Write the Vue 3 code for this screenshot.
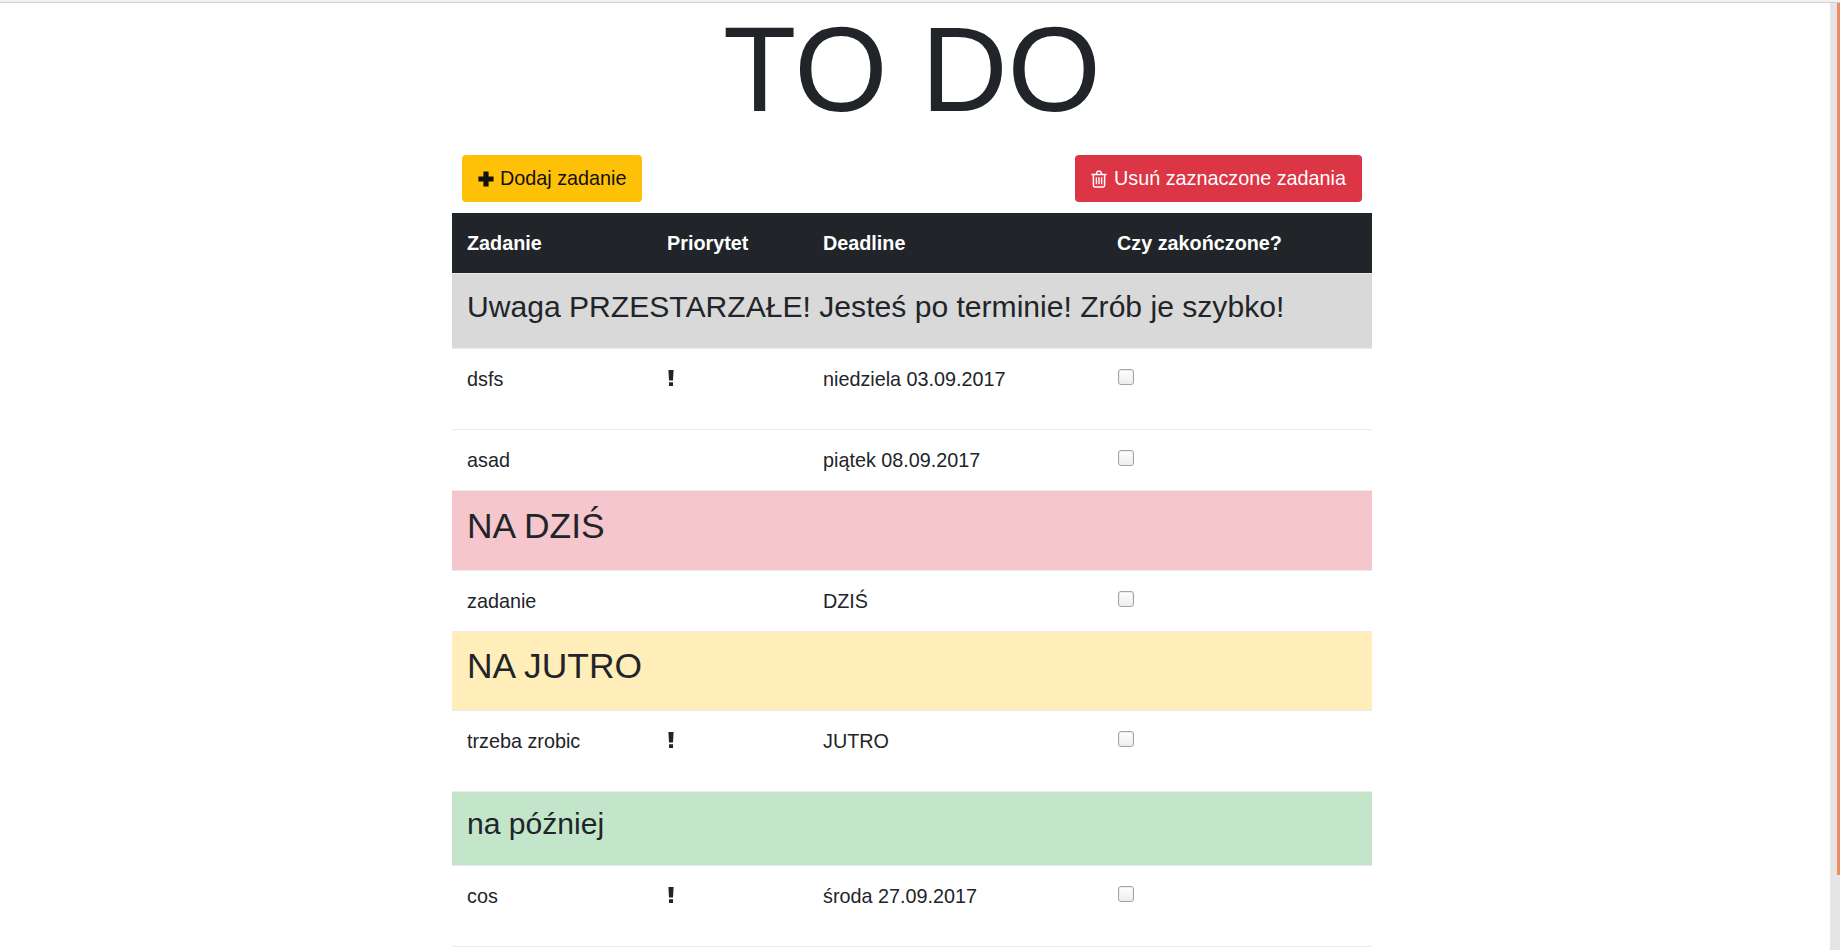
<template>
  <div class="page">
    <div class="container">
      <h1 class="title">TO DO</h1>

      <div class="actions">
        <button class="btn btn-add" type="button">
          <svg class="icon" viewBox="0 0 16 16" width="16" height="16" aria-hidden="true">
            <path d="M5.800 .4h4.400a.4.4 0 0 1 .4.4v4.600h4.600a.4.4 0 0 1 .4.4v4.400a.4.4 0 0 1-.4.4h-4.600v4.600a.4.4 0 0 1-.4.4H5.800a.4.4 0 0 1-.4-.4v-4.600H.8a.4.4 0 0 1-.4-.4V5.800a.4.4 0 0 1 .4-.4h4.600V.8a.4.4 0 0 1 .4-.4z" fill="currentColor" />
          </svg>
          Dodaj zadanie
        </button>
        <button class="btn btn-del" type="button">
          <svg class="icon" viewBox="0 0 16 18" width="16" height="18" aria-hidden="true">
            <path d="M.4 4.500h15.200M5.200 4.300l1-2.500a1 1 0 0 1 .9-.6h1.800a1 1 0 0 1 .9.6l1 2.500M2.400 4.500v10.700c0 1 .6 1.700 1.400 1.700h8.400c.8 0 1.400-.7 1.400-1.700V4.500" fill="none" stroke="currentColor" stroke-width="1.500" />
            <path d="M5.400 7.200v7M8 7.200v7M10.600 7.200v7" fill="none" stroke="currentColor" stroke-width="1.400" />
          </svg>
          Usuń zaznaczone zadania
        </button>
      </div>

      <table class="todo">
        <colgroup>
          <col class="c1" />
          <col class="c2" />
          <col class="c3" />
          <col class="c4" />
        </colgroup>
        <thead>
          <tr>
            <th>Zadanie</th>
            <th>Priorytet</th>
            <th>Deadline</th>
            <th>Czy zakończone?</th>
          </tr>
        </thead>
        <tbody v-for="group in groups" :key="group.title">
          <tr :class="['group', group.cls]">
            <td colspan="4">
              <div class="group-title">{{ group.title }}</div>
            </td>
          </tr>
          <tr v-for="task in group.tasks" :key="task.name" class="task">
            <td>{{ task.name }}</td>
            <td>
              <svg v-if="task.urgent" class="urgent" viewBox="0 0 6 16" width="6" height="16" role="img" aria-label="!">
                <path d="M.4 0h5.200l-.6 10.600H1zM1 12.300h4V16H1z" fill="currentColor" />
              </svg>
            </td>
            <td>{{ task.date }}</td>
            <td><input class="check" type="checkbox" /></td>
          </tr>
        </tbody>
      </table>
    </div>

    <div class="scrollbar"><div class="thumb"></div></div>
  </div>
</template>

<script setup>
const groups = [
  {
    title: 'Uwaga PRZESTARZAŁE! Jesteś po terminie! Zrób je szybko!',
    cls: 'overdue',
    tasks: [
      { name: 'dsfs', urgent: true, date: 'niedziela 03.09.2017' },
      { name: 'asad', urgent: false, date: 'piątek 08.09.2017' }
    ]
  },
  {
    title: 'NA DZIŚ',
    cls: 'today',
    tasks: [{ name: 'zadanie', urgent: false, date: 'DZIŚ' }]
  },
  {
    title: 'NA JUTRO',
    cls: 'tomorrow',
    tasks: [{ name: 'trzeba zrobic', urgent: true, date: 'JUTRO' }]
  },
  {
    title: 'na później',
    cls: 'later',
    tasks: [{ name: 'cos', urgent: true, date: 'środa 27.09.2017' }]
  }
]
</script>

<style>
html,
body {
  margin: 0;
  height: 100%;
  overflow: hidden;
  background: #fff;
}
</style>

<style scoped>
.page {
  position: relative;
  height: 950px;
  box-sizing: border-box;
  padding-top: 3px;
  /* strip of browser chrome at the very top */
  background: linear-gradient(#f3f1ef 2px, #d3cfcb 2px, #d3cfcb 3px, #fff 3px);
  overflow: hidden;
  font-family: "Liberation Sans", Arial, sans-serif;
  font-size: 19.8px;
  line-height: 1.5;
  color: #212529;
}

.container {
  width: 920px;
  margin-left: 452px;
}

.title {
  margin: 0;
  height: 152px;
  font-size: 120px;
  font-weight: 400;
  line-height: 132px;
  text-align: center;
}

.actions {
  display: flex;
  justify-content: space-between;
  padding: 0 10px;
  margin-bottom: 11px;
}

.btn {
  display: inline-flex;
  align-items: center;
  gap: 6px;
  height: 47px;
  padding: 0 16px;
  border: 0;
  border-radius: 4px;
  font: inherit;
  white-space: nowrap;
}

.btn-add {
  background: #ffc107;
  color: #111;
}

.btn-del {
  gap: 7px;
  background: #dc3545;
  color: #fff;
}

.icon {
  flex: none;
}

.todo {
  width: 920px;
  table-layout: fixed;
  border-collapse: collapse;
  border-bottom: 1px solid #e9ecef;
}

.c1 {
  width: 200px;
}

.c2 {
  width: 156px;
}

.c3 {
  width: 294px;
}

.c4 {
  width: 270px;
}

th {
  box-sizing: border-box;
  height: 60px;
  padding: 2px 15px 0;
  background: #212529;
  color: #fff;
  font-weight: 700;
  text-align: left;
  vertical-align: middle;
}

td {
  height: 30px;
  padding: 16px 15px 14px;
  border-top: 1px solid #e9ecef;
  vertical-align: top;
}

.group td {
  height: auto;
  padding: 15px;
}

.group-title {
  height: 44px;
  font-size: 30.1px;
  line-height: 36px;
}

.overdue td {
  background: #d9d9d9;
}

.today td {
  padding: 14px 15px 16px;
  background: #f5c6cb;
}

.today .group-title {
  height: 49px;
  font-size: 35.4px;
  line-height: 43px;
}

.tomorrow td {
  padding: 13px 15px 17px;
  background: #ffeeba;
}

.tomorrow .group-title {
  height: 48px;
  font-size: 35.4px;
  line-height: 43px;
}

.later td {
  padding: 14px 15px 16px;
  background: #c3e6cb;
}

.later .group-title {
  height: 43px;
  font-size: 30.1px;
  line-height: 36px;
}

.urgent {
  display: block;
  margin: 5px 0 29px 0.5px;
}

.check {
  display: block;
  appearance: none;
  box-sizing: border-box;
  width: 16px;
  height: 16px;
  margin: 4px 0 0 1px;
  border: 1px solid #a4a4a4;
  border-radius: 3px;
  background: linear-gradient(#fff, #ededed);
  box-shadow: inset 0 0 0 1px #ececec;
}

.scrollbar {
  position: absolute;
  top: 3px;
  right: 0;
  bottom: 0;
  width: 10px;
  background: #e5e5e5;
}

.thumb {
  position: absolute;
  top: 0;
  right: 0;
  width: 3px;
  height: 872px;
  background: #f08a60;
}
</style>
